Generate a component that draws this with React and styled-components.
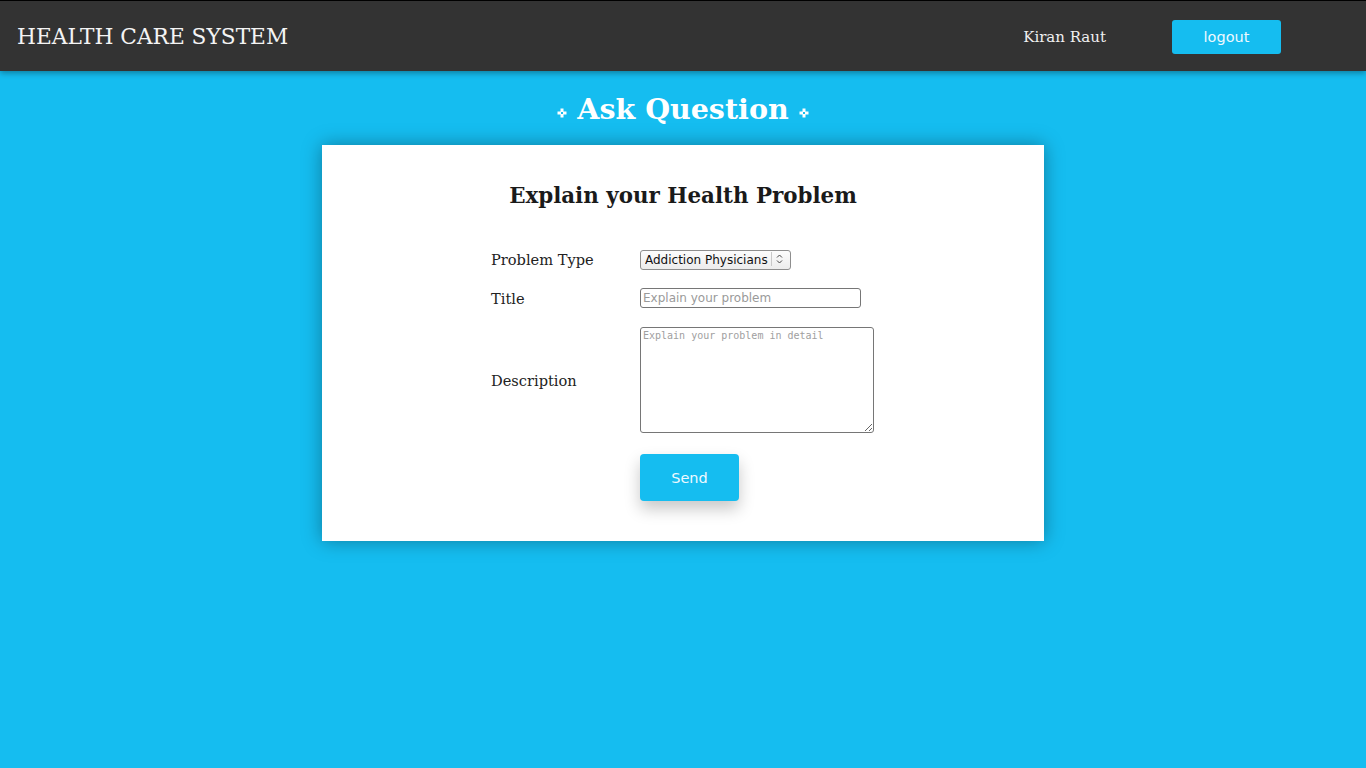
import React from "react";
import styled, { createGlobalStyle } from "styled-components";

const Global = createGlobalStyle`
  html, body { margin: 0; padding: 0; }
  body {
    background: #15bdf0;
    font-family: "DejaVu Serif", serif;
    min-height: 768px;
  }
`;

const NavBar = styled.header`
  height: 70px;
  background: #333333;
  border-top: 1px solid #000;
  display: flex;
  align-items: center;
  padding: 0 17px;
  box-shadow: 0 2px 6px rgba(0, 0, 0, 0.35);
  position: relative;
  z-index: 2;
`;

const Brand = styled.div`
  color: #f4f4f4;
  font-family: "DejaVu Serif", serif;
  font-size: 21.7px;
  flex: 1;
  margin-top: 1px;
`;

const UserName = styled.div`
  color: #f0f0f0;
  font-family: "DejaVu Serif", serif;
  font-size: 15px;
  margin-right: 66px;
  margin-top: 2px;
`;

const NavButton = styled.button`
  width: 109px;
  height: 34px;
  border: none;
  border-radius: 3px;
  background: #15bdf0;
  color: #eef9ff;
  font-family: "DejaVu Sans", sans-serif;
  font-size: 14.5px;
  margin-right: 68px;
  margin-top: 2px;
  cursor: pointer;
`;

const Main = styled.main`
  display: flex;
  flex-direction: column;
  align-items: center;
  padding-top: 19px;
`;

const PageTitle = styled.h1`
  margin: 0 0 17px;
  color: #ffffff;
  font-family: "DejaVu Serif", serif;
  font-size: 28.5px;
  font-weight: bold;
  display: flex;
  align-items: center;
  gap: 10px;
  height: 38px;
`;

const Deco = styled.svg`
  width: 10px;
  height: 10px;
  margin-top: 7px;
`;

const Card = styled.section`
  width: 722px;
  height: 396px;
  box-sizing: border-box;
  background: #fff;
  box-shadow: 0 0 18px rgba(0, 0, 0, 0.35);
  display: flex;
  flex-direction: column;
  align-items: center;
  padding-top: 37px;
`;

const CardTitle = styled.h2`
  margin: 0 0 39px;
  font-family: "DejaVu Serif", serif;
  font-size: 21.4px;
  font-weight: bold;
  color: #1a1a1a;
  line-height: 28px;
`;

const Form = styled.form`
  display: grid;
  grid-template-columns: 149px 234px;
  row-gap: 19px;
  align-items: center;
  margin-left: -1px;
`;

const Label = styled.label`
  font-family: "DejaVu Serif", serif;
  font-size: 14.6px;
  color: #222;
`;

const SelectWrap = styled.div`
  position: relative;
  justify-self: start;
  width: 151px;
  height: 20px;
`;

const Select = styled.select`
  appearance: none;
  width: 151px;
  height: 20px;
  box-sizing: border-box;
  padding: 0 22px 0 4px;
  border: 1px solid #8e8e8e;
  border-radius: 3px;
  background: linear-gradient(#fcfcfc, #ececec);
  font-family: "DejaVu Sans", sans-serif;
  font-size: 12px;
  color: #111;
  outline: none;
`;

const SelectArrow = styled.svg`
  position: absolute;
  right: 1px;
  top: 1px;
  width: 20px;
  height: 18px;
  pointer-events: none;
`;

const Input = styled.input`
  justify-self: start;
  width: 221px;
  height: 20px;
  box-sizing: border-box;
  font-family: "DejaVu Sans", sans-serif;
  font-size: 12px;
  padding: 1px 2px;
  border: 1px solid #767676;
  border-radius: 3px;
  &::placeholder { color: #9a9a9a; }
`;

const TextArea = styled.textarea`
  width: 234px;
  height: 106px;
  box-sizing: border-box;
  font-family: "DejaVu Sans Mono", monospace;
  font-size: 10px;
  padding: 2px;
  border: 1px solid #767676;
  border-radius: 3px;
  resize: both;
  &::placeholder { color: #a0a0a0; }
`;

const SendButton = styled.button`
  grid-column: 2;
  justify-self: start;
  width: 99px;
  height: 47px;
  border: none;
  border-radius: 4px;
  background: #15bdf0;
  color: #eef9ff;
  font-family: "DejaVu Sans", sans-serif;
  font-size: 14.5px;
  box-shadow: 0 8px 16px rgba(0, 0, 0, 0.22);
  cursor: pointer;
  margin-top: 2px;
`;

const Cross = () => (
  <Deco viewBox="0 0 10 10">
    <path d="M3.5 0.5h3v3h3v3h-3v3h-3v-3h-3v-3h3z" fill="#fff" />
    <rect x="4" y="4" width="2" height="2" fill="#15bdf0" />
  </Deco>
);

export default function App() {
  return (
    <>
      <Global />
      <NavBar>
        <Brand>HEALTH CARE SYSTEM</Brand>
        <UserName>Kiran Raut</UserName>
        <NavButton>logout</NavButton>
      </NavBar>
      <Main>
        <PageTitle>
          <Cross />
          Ask Question
          <Cross />
        </PageTitle>
        <Card>
          <CardTitle>Explain your Health Problem</CardTitle>
          <Form onSubmit={(e) => e.preventDefault()}>
            <Label>Problem Type</Label>
            <SelectWrap>
              <Select defaultValue="Addiction Physicians">
                <option>Addiction Physicians</option>
                <option>Cardiologists</option>
                <option>Dermatologists</option>
              </Select>
              <SelectArrow viewBox="0 0 20 18">
                <line x1="1.5" y1="2" x2="1.5" y2="16" stroke="#c8c8c8" strokeWidth="1" />
                <path d="M7 7.5l2.5-2.5 2.5 2.5M7 10.5l2.5 2.5 2.5-2.5" fill="none" stroke="#444" strokeWidth="1" />
              </SelectArrow>
            </SelectWrap>
            <Label>Title</Label>
            <Input placeholder="Explain your problem" />
            <Label>Description</Label>
            <TextArea placeholder="Explain your problem in detail" />
            <SendButton type="submit">Send</SendButton>
          </Form>
        </Card>
      </Main>
    </>
  );
}
